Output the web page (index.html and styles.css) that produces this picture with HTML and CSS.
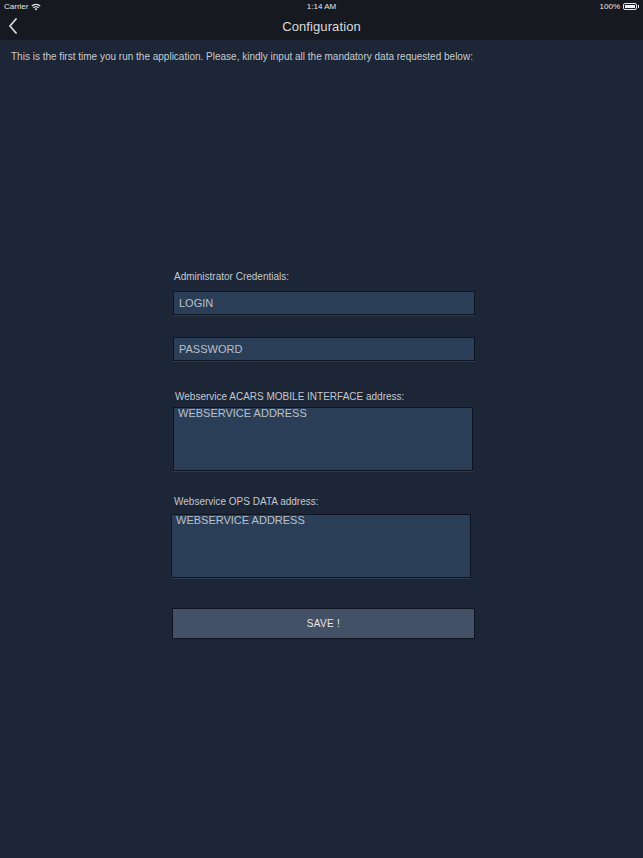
FILE: index.html
```html
<!DOCTYPE html>
<html lang="en">
<head>
    <meta charset="UTF-8" />
    <meta name="viewport" content="width=device-width, initial-scale=1.0"/>
    <title>Configuration</title>
    <link rel="stylesheet" href="styles.css">
</head>
<body>
<div class="status-bar">
    <div class="status-left">
        <span>Carrier</span>
        <svg class="wifi" width="10" height="8" viewBox="0 0 10 8">
            <path d="M5 7.5 L3.6 6 A2 2 0 0 1 6.4 6 Z" fill="#e6e6e6"/>
            <path d="M2.4 4.8 A3.7 3.7 0 0 1 7.6 4.8" stroke="#e6e6e6" stroke-width="1.2" fill="none"/>
            <path d="M0.8 3 A6 6 0 0 1 9.2 3" stroke="#e6e6e6" stroke-width="1.2" fill="none"/>
        </svg>
    </div>
    <div class="status-time">1:14 AM</div>
    <div class="status-right">
        <span>100%</span>
        <div class="battery"><div class="battery-fill"></div></div>
    </div>
</div>

<div class="nav-bar">
    <svg class="back" width="10" height="16" viewBox="0 0 10 16">
        <path d="M8 1 L2 8 L8 15" stroke="#d8d8d8" stroke-width="1.8" fill="none" stroke-linecap="round" stroke-linejoin="round"/>
    </svg>
    <h1>Configuration</h1>
</div>

<p class="intro">This is the first time you run the application. Please, kindly input all the mandatory data requested below:</p>

<div class="form">
    <label class="label">Administrator Credentials:</label>
    <input class="field login" type="text" placeholder="LOGIN">
    <input class="field password" type="text" placeholder="PASSWORD">

    <label class="label label-acars">Webservice ACARS MOBILE INTERFACE address:</label>
    <textarea class="area area-acars" placeholder="WEBSERVICE ADDRESS"></textarea>

    <label class="label label-ops">Webservice OPS DATA address:</label>
    <textarea class="area area-ops" placeholder="WEBSERVICE ADDRESS"></textarea>

    <button class="save">SAVE !</button>
</div>
</body>
</html>
```

FILE: styles.css
```css
* {
    box-sizing: border-box;
    margin: 0;
    padding: 0;
    font-family: 'Liberation Sans', Arial, sans-serif;
}

body {
    background-color: #1c2636;
    width: 643px;
    height: 858px;
    overflow: hidden;
}

.status-bar {
    height: 13px;
    background-color: #16191f;
    display: flex;
    align-items: center;
    justify-content: space-between;
    padding: 0 6px 0 4px;
    font-size: 8px;
    color: #e6e6e6;
    position: relative;
}

.status-left {
    display: flex;
    align-items: center;
    gap: 3px;
}

.status-time {
    position: absolute;
    left: 0;
    right: 0;
    text-align: center;
    top: 2px;
}

.status-right {
    display: flex;
    align-items: center;
    gap: 3px;
}

.battery {
    width: 14px;
    height: 7px;
    border: 1px solid #e6e6e6;
    border-radius: 2px;
    padding: 1px;
    position: relative;
}

.battery::after {
    content: '';
    position: absolute;
    right: -3px;
    top: 1px;
    width: 1px;
    height: 3px;
    background-color: #e6e6e6;
}

.battery-fill {
    width: 100%;
    height: 100%;
    background-color: #f2f2f2;
}

.nav-bar {
    height: 27px;
    background-color: #16191f;
    display: flex;
    align-items: center;
    justify-content: center;
    position: relative;
}

.back {
    position: absolute;
    left: 8px;
    top: 5px;
}

h1 {
    font-size: 13px;
    font-weight: normal;
    color: #dcdcdc;
    letter-spacing: 0.1px;
    margin-top: -1px;
}

.intro {
    font-size: 10px;
    color: #c6cbd2;
    padding: 11px 0 0 11px;
    line-height: 12px;
}

.form {
    display: flex;
    flex-direction: column;
    width: 302px;
    margin: 208px 0 0 173px;
}

.label {
    font-size: 10px;
    line-height: 12px;
    color: #c3c8d0;
    padding-left: 1px;
}

.field {
    height: 24px;
    background-color: #2a3e58;
    border: 1px solid #0f1520;
    box-shadow: 0 1px 0 #2f3a4a;
    padding: 0 5px;
    font-size: 11px;
    color: #b9c0ca;
    outline: none;
}

.field::placeholder,
.area::placeholder {
    color: #b9c0ca;
    opacity: 1;
}

.login {
    margin-top: 8px;
}

.password {
    margin-top: 22px;
}

.label-acars {
    margin-top: 30px;
    padding-left: 2px;
}

.area {
    width: 300px;
    height: 64px;
    background-color: #2a3e58;
    border: 1px solid #0f1520;
    box-shadow: 0 1px 0 #2f3a4a;
    padding: 0 4px;
    font-size: 11px;
    line-height: 11px;
    color: #b9c0ca;
    resize: none;
    outline: none;
}

.area-acars {
    margin-top: 4px;
}

.label-ops {
    margin-top: 25px;
}

.area-ops {
    margin: 6px 0 0 -2px;
}

.save {
    margin: 30px 0 0 -1px;
    width: 303px;
    height: 31px;
    background-color: #435065;
    border: 1px solid #0f1520;
    color: #e6e8ec;
    font-size: 10px;
    letter-spacing: 0.3px;
}
```
